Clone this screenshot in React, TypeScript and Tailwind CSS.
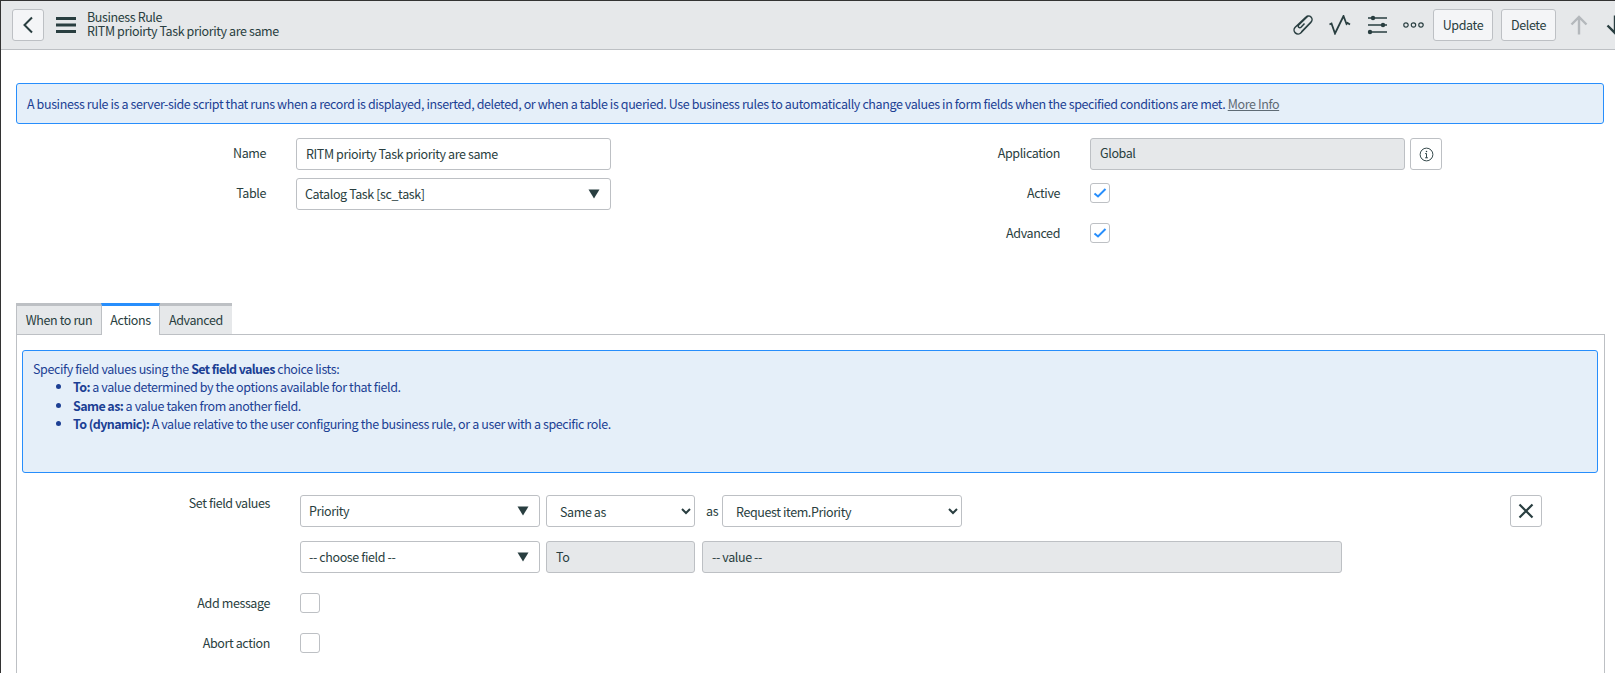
import React from "react";

const font = { fontFamily: '"Noto Sans CJK SC", "Noto Sans", sans-serif' };

function Tri() {
  return (
    <svg width="12" height="10" viewBox="0 0 12 10" className="shrink-0">
      <path d="M0.5 0.5h11L6 9.5z" fill="#293e40" />
    </svg>
  );
}

function Check({ checked }: { checked?: boolean }) {
  return (
    <div className="w-5 h-5 rounded-[3px] border border-[#bdc0c4] bg-white flex items-center justify-center">
      {checked && (
        <svg width="14" height="12" viewBox="0 0 14 12">
          <path d="M1.5 6.5l3.5 3L12.5 2" fill="none" stroke="#278efc" strokeWidth="2" />
        </svg>
      )}
    </div>
  );
}

function Ref({ text, className }: { text: string; className: string }) {
  return (
    <div className={`h-8 rounded-[3px] border border-[#bdc0c4] bg-white flex items-center justify-between pl-[8px] pr-[10px] ${className}`}>
      <span className="mb-[1px]">{text}</span>
      <Tri />
    </div>
  );
}

function Label({ text, className = "" }: { text: string; className?: string }) {
  return <div className={`text-right ${className}`}>{text}</div>;
}

function HeaderButton({ text, className }: { text: string; className: string }) {
  return (
    <button className={`h-8 shrink-0 rounded-[3px] border border-[#bdc0c4] bg-[#f4f5f7] text-[#293e40] leading-none ${className}`}>
      {text}
    </button>
  );
}

function B({ children }: { children: React.ReactNode }) {
  return <b className="font-semibold tracking-[-0.6px]">{children}</b>;
}

export default function App() {
  return (
    <div style={font} className="w-[1615px] h-[673px] overflow-hidden bg-white border-l border-t border-[#333] text-[12.5px] tracking-[-0.39px] leading-[20px] text-[#293e40]">
      <header className="h-[49px] bg-[#e6e8ea] border-b border-[#bdc0c4] flex items-center pl-[11px]">
        <button className="w-8 h-8 rounded-[3px] border border-[#bdc0c4] bg-[#f4f5f7] flex items-center justify-center">
          <svg width="12" height="18" viewBox="0 0 12 18">
            <path d="M10 1.5L2.5 9l7.5 7.5" fill="none" stroke="#293e40" strokeWidth="2" />
          </svg>
        </button>
        <svg width="20" height="16" viewBox="0 0 20 16" className="ml-[12px]">
          <path d="M0 1.5h20M0 8h20M0 14.5h20" stroke="#293e40" strokeWidth="3" />
        </svg>
        <div className="ml-[11px] mb-[3px] leading-[13.5px] whitespace-nowrap">
          <div>Business Rule</div>
          <div>RITM prioirty Task priority are same</div>
        </div>
        <div className="ml-auto flex items-center shrink-0 w-[323px]">
          <svg width="22" height="22" viewBox="0 0 22 22" className="shrink-0">
            <path d="M12.5 9.5L9 13.2a1.6 1.6 0 0 1-2.3-2.3L16 1.9M19.3 8l-10.3 10.8a4 4 0 0 1-5.8-5.6L14 3a3.5 3.5 0 0 1 5 5l-9.5 9.8" fill="none" stroke="#293e40" strokeWidth="1.5" />
          </svg>
          <svg width="22" height="20" viewBox="0 0 22 20" className="ml-[15px] shrink-0">
            <path d="M0.5 9.5L2.5 8.5L6 18.5L14.5 1L17.5 9L18.5 8L21 9.5" fill="none" stroke="#293e40" strokeWidth="1.8" />
          </svg>
          <svg width="21" height="20" viewBox="0 0 21 20" className="ml-[16px] shrink-0">
            <path d="M1 3h19M1 10h19M1 17h19" stroke="#293e40" strokeWidth="1.7" />
            <circle cx="6" cy="3" r="2.2" fill="#293e40" />
            <circle cx="16" cy="10" r="2.2" fill="#293e40" />
            <circle cx="3" cy="17" r="2.2" fill="#293e40" />
          </svg>
          <svg width="21" height="6" viewBox="0 0 21 6" className="ml-[15px] shrink-0">
            <circle cx="3" cy="3" r="2.2" fill="none" stroke="#293e40" strokeWidth="1.2" />
            <circle cx="10.5" cy="3" r="2.2" fill="none" stroke="#293e40" strokeWidth="1.2" />
            <circle cx="18" cy="3" r="2.2" fill="none" stroke="#293e40" strokeWidth="1.2" />
          </svg>
          <HeaderButton text="Update" className="w-[60px] ml-[9px]" />
          <HeaderButton text="Delete" className="w-[55px] ml-[8px]" />
          <svg width="18" height="20" viewBox="0 0 18 20" className="ml-[14px] shrink-0">
            <path d="M9 19.5V2M1.5 9.5L9 2l7.5 7.5" fill="none" stroke="#b4b8bc" strokeWidth="2.4" />
          </svg>
          <svg width="18" height="20" viewBox="0 0 18 20" className="ml-[18px] shrink-0">
            <path d="M9 0.5V18M1.5 10.5L9 18l7.5-7.5" fill="none" stroke="#293e40" strokeWidth="2.4" />
          </svg>
        </div>
      </header>

      <main className="pt-[33px] pl-[15px]">
        <div className="w-[1588px] h-[41px] rounded-[3px] border border-[#278efc] bg-[#e5eff9] text-[#1c3f94] flex items-center pl-[10px] whitespace-nowrap">
          <span>
            A business rule is a server-side script that runs when a record is displayed, inserted, deleted, or when a table is queried. Use business rules to automatically change values in form fields when the specified conditions are met.{" "}
            <span className="underline text-[#5f6b75]">More Info</span>
          </span>
        </div>

        <div className="flex mt-[14px] h-[165px]">
          <div className="w-[596px] flex flex-col gap-2">
            <div className="flex items-center">
              <Label text="Name" className="w-[250px] mb-[2px]" />
              <input readOnly value="RITM prioirty Task priority are same" className="ml-[30px] w-[315px] h-8 rounded-[3px] border border-[#bdc0c4] bg-white pl-[9px] pb-[2px] outline-none" />
            </div>
            <div className="flex items-center">
              <Label text="Table" className="w-[250px] mb-[2px]" />
              <Ref text="Catalog Task [sc_task]" className="ml-[30px] w-[315px]" />
            </div>
          </div>
          <div className="flex flex-col">
            <div className="flex items-center">
              <Label text="Application" className="w-[448px] mb-[2px]" />
              <div className="ml-[30px] w-[315px] h-8 rounded-[3px] border border-[#bdc0c4] bg-[#e6e8ea] flex items-center pl-[9px] pb-[2px]">Global</div>
              <button className="ml-[5px] w-8 h-8 rounded-[3px] border border-[#bdc0c4] bg-white flex items-center justify-center">
                <svg width="15" height="15" viewBox="0 0 16 16">
                  <circle cx="8" cy="8" r="6.8" fill="none" stroke="#293e40" strokeWidth="1" />
                  <path d="M8 7v4.5M6.5 7H8M6.5 11.5h3" fill="none" stroke="#293e40" strokeWidth="1" />
                  <circle cx="8" cy="4.8" r="0.8" fill="#293e40" />
                </svg>
              </button>
            </div>
            <div className="flex items-center mt-[13px]">
              <Label text="Active" className="w-[448px]" />
              <div className="ml-[30px]"><Check checked /></div>
            </div>
            <div className="flex items-center mt-5">
              <Label text="Advanced" className="w-[448px]" />
              <div className="ml-[30px]"><Check checked /></div>
            </div>
          </div>
        </div>

        <div className="flex h-[31px] relative z-10 whitespace-nowrap">
          <div className="w-[85px] h-[31px] bg-[#e6e8ea] border-t-[3px] border-l border-[#bdc0c4] flex items-center justify-center">When to run</div>
          <div className="w-[59px] h-[32px] bg-white border-t-[3px] border-t-[#278efc] border-x border-x-[#bdc0c4] flex items-center justify-center pb-[2px]">Actions</div>
          <div className="w-[72px] h-[31px] bg-[#e6e8ea] border-t-[3px] border-[#bdc0c4] flex items-center justify-center">Advanced</div>
        </div>

        <section className="w-[1589px] h-[400px] border border-[#bdc0c4] pt-[15px] pl-[5px]">
          <div className="w-[1576px] h-[123px] rounded-[3px] border border-[#278efc] bg-[#e5eff9] text-[#1c3f94] pl-[10px] pt-[9px] leading-[18.3px]">
            <div>Specify field values using the <B>Set field values</B> choice lists:</div>
            <ul className="list-disc pl-[40px]">
              <li><B>To:</B> a value determined by the options available for that field.</li>
              <li><B>Same as:</B> a value taken from another field.</li>
              <li><B>To (dynamic):</B> A value relative to the user configuring the business rule, or a user with a specific role.</li>
            </ul>
          </div>

          <div className="mt-[22px] flex">
            <Label text="Set field values" className="w-[248px] -mt-[2px]" />
            <div className="ml-[30px] flex flex-col gap-[14px]">
              <div className="flex items-center">
                <Ref text="Priority" className="w-[240px]" />
                <select className="ml-[6px] w-[149px] h-8 rounded-[3px] border border-[#bdc0c4] bg-white pl-[9px]" defaultValue="Same as">
                  <option>Same as</option>
                </select>
                <span className="ml-[11px] w-[16px]">as</span>
                <select className="w-[240px] h-8 rounded-[3px] border border-[#bdc0c4] bg-white pl-[9px]" defaultValue="Request item.Priority">
                  <option>Request item.Priority</option>
                </select>
                <button className="ml-[548px] w-8 h-8 rounded-[3px] border border-[#bdc0c4] bg-white flex items-center justify-center">
                  <svg width="16" height="16" viewBox="0 0 16 16">
                    <path d="M1.5 1.5l13 13M14.5 1.5l-13 13" stroke="#293e40" strokeWidth="2.2" />
                  </svg>
                </button>
              </div>
              <div className="flex items-center">
                <Ref text="-- choose field --" className="w-[240px]" />
                <div className="ml-[6px] w-[149px] h-8 rounded-[3px] border border-[#bdc0c4] bg-[#e6e8ea] flex items-center pl-[9px]">To</div>
                <div className="ml-[7px] w-[640px] h-8 rounded-[3px] border border-[#bdc0c4] bg-[#e6e8ea] flex items-center pl-[9px]">-- value --</div>
              </div>
              <div className="-ml-[278px] mt-[6px] flex flex-col gap-5">
                <div className="flex items-center">
                  <Label text="Add message" className="w-[248px]" />
                  <div className="ml-[30px]"><Check /></div>
                </div>
                <div className="flex items-center">
                  <Label text="Abort action" className="w-[248px]" />
                  <div className="ml-[30px]"><Check /></div>
                </div>
              </div>
            </div>
          </div>
        </section>
      </main>
    </div>
  );
}
